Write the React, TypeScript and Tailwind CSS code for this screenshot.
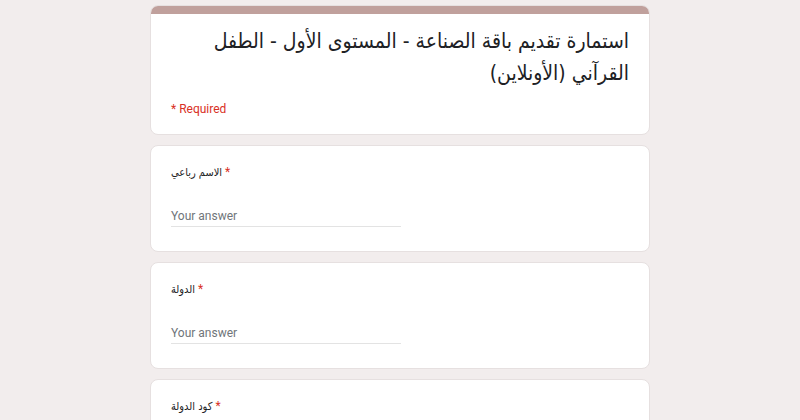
import React from 'react'

const questions = ['الاسم رباعي', 'الدولة', 'كود الدولة']

const arabic = { fontFamily: '"DejaVu Sans Condensed", "DejaVu Sans", sans-serif' }

function Question({ label }: { label: string }) {
    return (
        <div className="bg-white rounded-lg border border-[#e6e0e0] px-5 pt-[16px] pb-[24px]">
            <div className="text-[12px] leading-5 text-[#202124]">
                <span style={arabic} className="text-[11px]">{label}</span> <span className="text-[#d93025]">*</span>
            </div>
            <div className="mt-[23px] w-[230px] border-b border-[#e3e3e3] text-[12px] leading-5 text-[#70757a]">
                Your answer
            </div>
        </div>
    )
}

export default function App() {
    return (
        <div
            className="min-h-screen bg-[#f2eded] pt-[5px]"
            style={{ fontFamily: 'Roboto, "Liberation Sans", "DejaVu Sans", sans-serif' }}
        >
            <div className="w-[500px] mx-auto flex flex-col gap-[10px]">
                <div className="bg-white rounded-lg border border-[#e6e0e0] overflow-hidden">
                    <div className="h-[8px] bg-[#c0a09c]" />
                    <div className="px-5 pt-[11px] pb-[17px]">
                        <h1 dir="rtl" style={arabic} className="text-[21px] leading-8 text-[#202124] font-normal">
                            استمارة تقديم باقة الصناعة - المستوى الأول - الطفل القرآني (الأونلاين)
                        </h1>
                        <div className="mt-3 text-[12px] leading-4 text-[#d93025]">* Required</div>
                    </div>
                </div>
                {questions.map(q => (
                    <Question key={q} label={q} />
                ))}
            </div>
        </div>
    )
}
